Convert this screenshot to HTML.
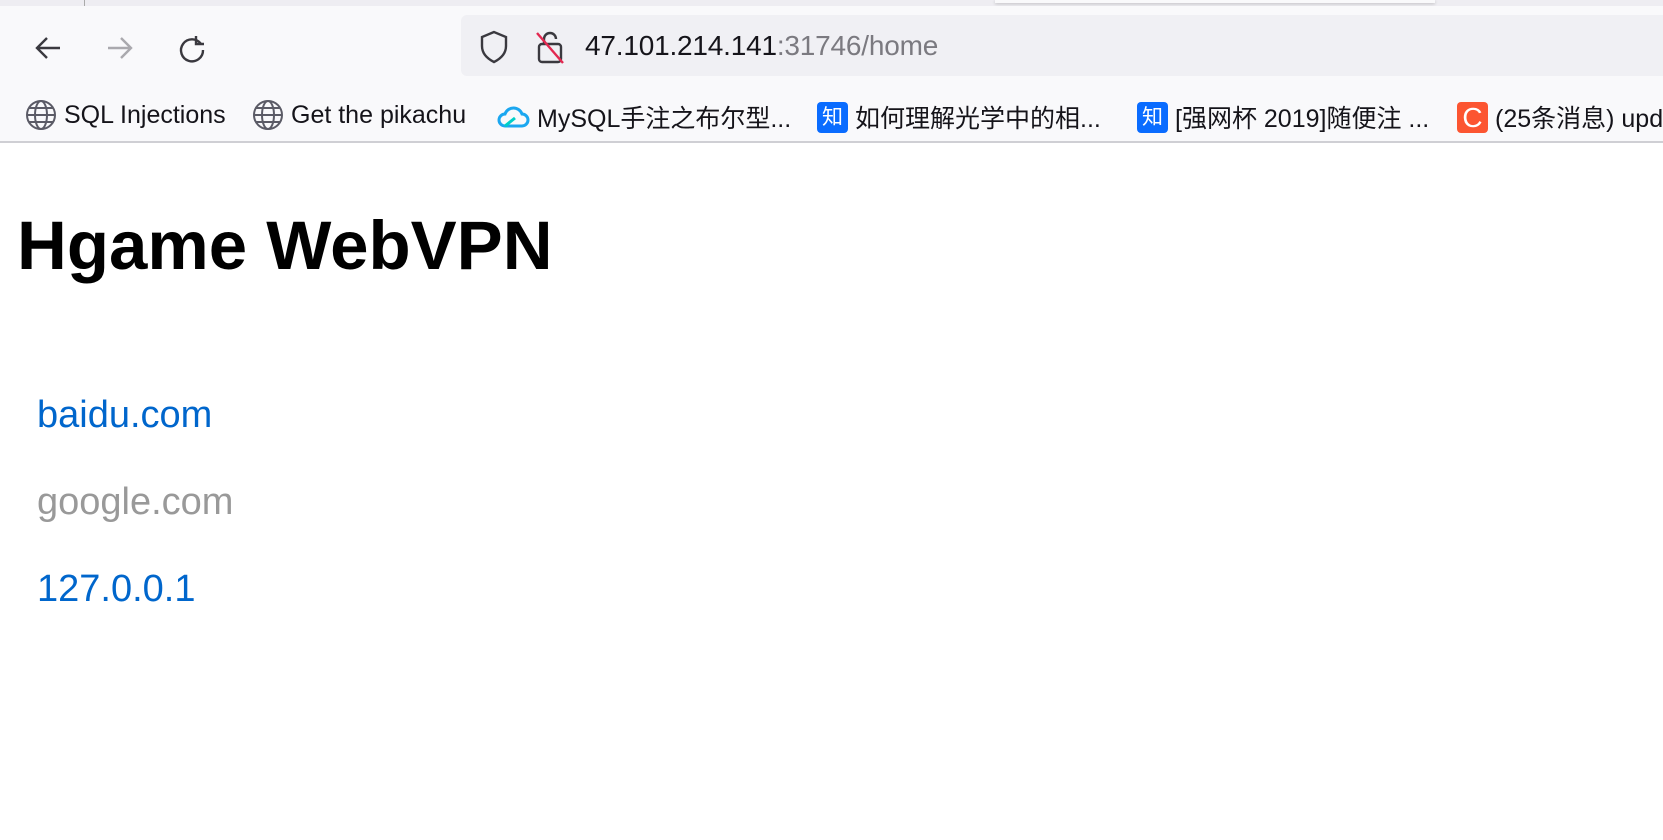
<!DOCTYPE html>
<html><head><meta charset="utf-8"><style>
*{margin:0;padding:0;box-sizing:border-box}
body{width:1663px;height:840px;overflow:hidden;background:#fff;font-family:"Liberation Sans","Noto Sans CJK SC",sans-serif;position:relative}
.tabs{position:absolute;left:0;top:0;width:1663px;height:6px;background:#eeedf2}
.tabs .sep{position:absolute;left:84px;top:0;width:1px;height:6px;background:#aaa}
.tabs .act{position:absolute;left:995px;top:0;width:440px;height:3px;background:#f9f9fb;box-shadow:0 1px 3px rgba(0,0,0,.2)}
.tb{position:absolute;left:0;top:6px;width:1663px;height:137px;background:#f9f9fb;border-bottom:2px solid #cfcfd4}
.url{position:absolute;left:461px;top:9px;width:1210px;height:61px;background:#f0f0f4;border-radius:6px}
.ic{position:absolute}
.urltext{position:absolute;left:585px;top:30px;font-size:28px;color:#15141a;letter-spacing:-.2px}
.urltext span{color:#7b7a80}
.bm{position:absolute;top:99px;font-size:25px;color:#15141a;white-space:nowrap;display:flex;align-items:center}
.bm svg,.bm .z{margin-right:7px}
.z{display:inline-block;width:31px;height:31px;border-radius:4px;background:#0a6cff;color:#fff;font-size:21px;text-align:center;line-height:31px}
h1{position:absolute;left:17px;top:206px;font-size:69px;font-weight:bold;color:#000}
.a{position:absolute;left:37px;font-size:38px;color:#0066cc}
</style></head><body>
<div class="tabs"><div class="sep"></div><div class="act"></div></div>
<div class="tb"></div>
<div class="url" style="top:15px"></div>
<svg class="ic" style="left:32px;top:32px" width="32" height="32" viewBox="0 0 32 32"><path d="M28 16H5M15 6L5 16l10 10" stroke="#3a393f" stroke-width="2.4" fill="none"/></svg>
<svg class="ic" style="left:104px;top:32px" width="32" height="32" viewBox="0 0 32 32"><path d="M4 16h23M17 6l10 10-10 10" stroke="#aaa9ae" stroke-width="2.4" fill="none"/></svg>
<svg class="ic" style="left:176px;top:32px" width="32" height="32" viewBox="0 0 32 32"><path d="M25 12A11 11 0 1 0 27 18" stroke="#3a393f" stroke-width="2.4" fill="none"/><path d="M20 4v8h8" stroke="#3a393f" stroke-width="2.4" fill="none"/></svg>
<svg class="ic" style="left:478px;top:29px" width="32" height="36" viewBox="0 0 32 36"><path d="M16 3L4 8v9c0 8 6 13 12 16 6-3 12-8 12-16V8z" stroke="#3a393f" stroke-width="2.4" fill="none"/></svg>
<svg class="ic" style="left:533px;top:28px" width="34" height="38" viewBox="0 0 34 38"><rect x="6" y="16" width="22" height="18" rx="3" stroke="#3a393f" stroke-width="2.4" fill="none"/><path d="M11 16v-5a6 6 0 0 1 12 0" stroke="#3a393f" stroke-width="2.4" fill="none"/><path d="M4 5l26 30" stroke="#e22850" stroke-width="2.4"/></svg>
<div class="urltext">47.101.214.141<span>:31746/home</span></div>
<div class="bm" style="left:25px"><svg width="32" height="32" viewBox="0 0 32 32" fill="none" stroke="#5b5b66" stroke-width="2"><circle cx="16" cy="16" r="14"/><ellipse cx="16" cy="16" rx="6" ry="14"/><path d="M2 16h28M4 9h24M4 23h24"/></svg>SQL Injections</div>
<div class="bm" style="left:252px"><svg width="32" height="32" viewBox="0 0 32 32" fill="none" stroke="#5b5b66" stroke-width="2"><circle cx="16" cy="16" r="14"/><ellipse cx="16" cy="16" rx="6" ry="14"/><path d="M2 16h28M4 9h24M4 23h24"/></svg>Get the pikachu</div>
<div class="bm" style="left:496px"><svg width="34" height="32" viewBox="0 0 34 32" fill="none" stroke-width="3"><path d="M9 25a6 6 0 0 1 0-12 9 9 0 0 1 17 0 6 6 0 0 1 0 12z" stroke="#1ba7f0"/><path d="M9 25l10-8" stroke="#00d0c8"/></svg>MySQL手注之布尔型...</div>
<div class="bm" style="left:817px"><span class="z">知</span>如何理解光学中的相...</div>
<div class="bm" style="left:1137px"><span class="z">知</span>[强网杯 2019]随便注 ...</div>
<div class="bm" style="left:1457px"><span class="z" style="background:#fc5531;font-size:28px">C</span>(25条消息) update</div>
<h1>Hgame WebVPN</h1>
<div class="a" style="top:394px">baidu.com</div>
<div class="a" style="top:481px;color:#999">google.com</div>
<div class="a" style="top:568px">127.0.0.1</div>
</body></html>
